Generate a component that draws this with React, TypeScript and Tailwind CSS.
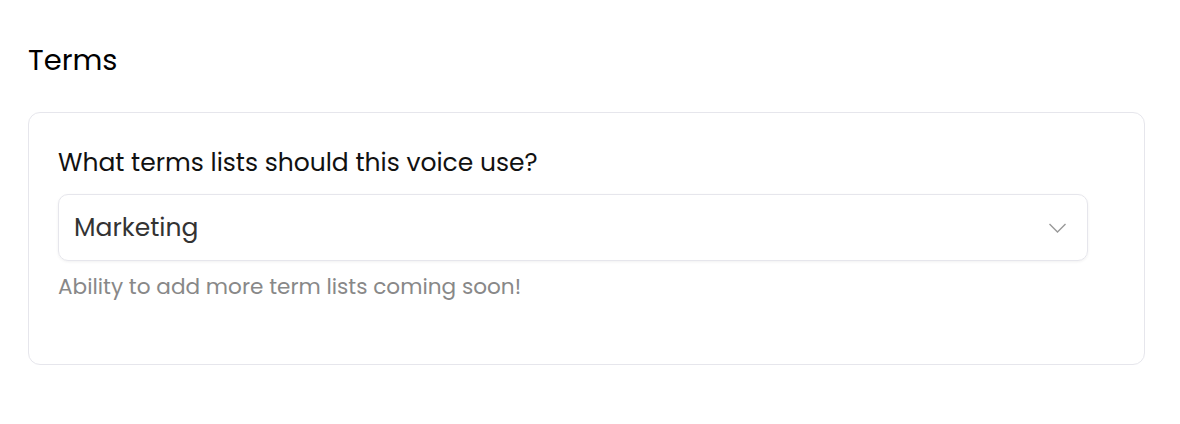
import React from "react";

export default function App() {
  return (
    <div className="w-[1180px] h-[424px] bg-white" style={{ fontFamily: "Poppins, 'Open Sans', sans-serif" }}>
      <div className="pl-[28px] pt-[40px]">
        <h1 className="text-[29px] leading-[40px] font-normal text-black">Terms</h1>
        <div className="mt-[32px] w-[1117px] h-[253px] rounded-[12px] border border-[#e6e6ec] pl-[29px] pt-[30px]">
          <div className="text-[25px] leading-[40px] text-[#111]">What terms lists should this voice use?</div>
          <div className="mt-[11px] w-[1030px] h-[67px] rounded-[10px] border border-[#e6e6ec] shadow-[0_1px_3px_rgba(0,0,0,0.06)] flex items-center justify-between pl-[15px] pr-[21px]">
            <span className="text-[25px] text-[#333]">Marketing</span>
            <svg width="17" height="10" viewBox="0 0 17 10" fill="none">
              <path d="M0.5 1 L8.5 9 L16.5 1" stroke="#999" strokeWidth="1.4" />
            </svg>
          </div>
          <div className="mt-[10px] text-[21.6px] leading-[32px] text-[#888]">Ability to add more term lists coming soon!</div>
        </div>
      </div>
    </div>
  );
}
